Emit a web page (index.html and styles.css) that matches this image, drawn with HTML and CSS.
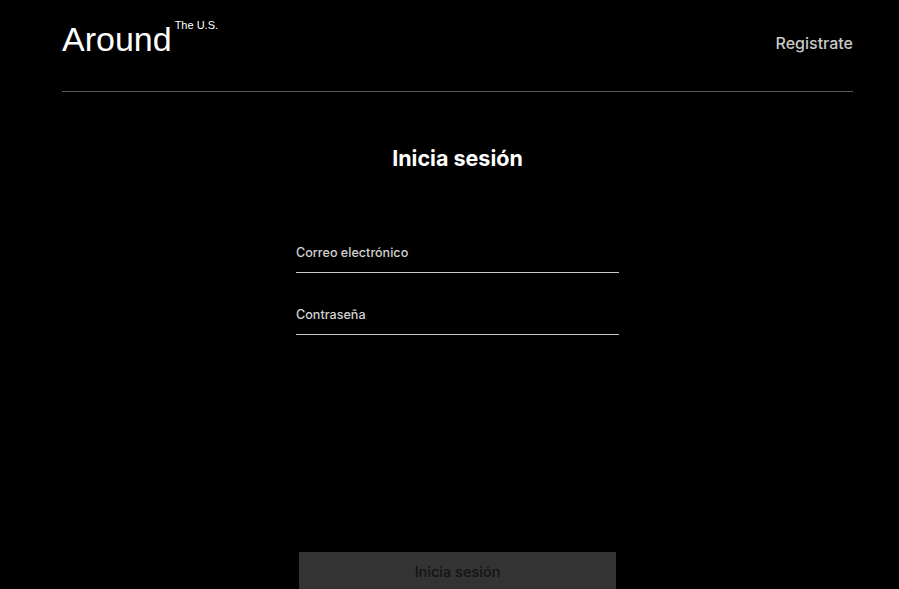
FILE: index.html
```html
<!DOCTYPE html>
<html lang="es">
<head>
<meta charset="utf-8">
<title>Around - Inicia sesión</title>
<link rel="stylesheet" href="styles.css">
</head>
<body>
<div class="page">
  <header class="header">
    <div class="logo">Around<sup class="logo-sup">The U.S.</sup></div>
    <a class="nav-link" href="#">Registrate</a>
  </header>
  <main class="auth">
    <h1 class="auth-title">Inicia sesión</h1>
    <form class="auth-form">
      <div class="field"><span class="field-label">Correo electrónico</span></div>
      <div class="field"><span class="field-label">Contraseña</span></div>
      <button class="auth-button" type="button">Inicia sesión</button>
    </form>
  </main>
</div>
</body>
</html>
```
FILE: styles.css
```css
html, body {
  margin: 0;
  padding: 0;
  background: #000;
  height: 100%;
  overflow: hidden;
}
body {
  font-family: Inter, "Liberation Sans", sans-serif;
  color: #fff;
}
.page {
  margin-left: 62px;
  width: 791px;
}
.header {
  display: flex;
  justify-content: space-between;
  align-items: flex-start;
  border-bottom: 1px solid #5a5a5a;
  box-sizing: border-box;
  height: 92px;
}
.logo {
  font-family: "Liberation Sans", Arial, sans-serif;
  font-size: 34px;
  line-height: 1;
  margin-top: 22px;
  display: flex;
  align-items: flex-start;
}
.logo-sup {
  font-size: 11px;
  line-height: 1;
  margin-left: 3px;
  margin-top: -2px;
  vertical-align: baseline;
}
.nav-link {
  color: #c9c9c9;
  text-decoration: none;
  font-size: 16px;
  font-weight: 500;
  margin-top: 33px;
  line-height: 20px;
}
.auth {
  display: flex;
  flex-direction: column;
  align-items: center;
}
.auth-title {
  font-size: 21.5px;
  font-weight: 700;
  margin: 54px 0 0;
  line-height: 24px;
}
.auth-form {
  width: 323px;
  display: flex;
  flex-direction: column;
  margin-top: 74px;
}
.field {
  border-bottom: 1px solid #c9c9c9;
  padding: 1px 0 11px;
  margin-bottom: 34px;
}
.field + .field {
  margin-top: -1px;
}
.field-label {
  font-size: 12.6px;
  font-weight: 500;
  color: #d2d2d2;
  line-height: 16px;
  display: block;
}
.auth-button {
  align-self: center;
  width: 317px;
  height: 40px;
  margin-top: 183px;
  background: #333;
  border: none;
  color: #141414;
  font-family: Inter, "Liberation Sans", sans-serif;
  font-size: 14.5px;
  font-weight: 500;
  padding: 0 0 2px;
}
```
